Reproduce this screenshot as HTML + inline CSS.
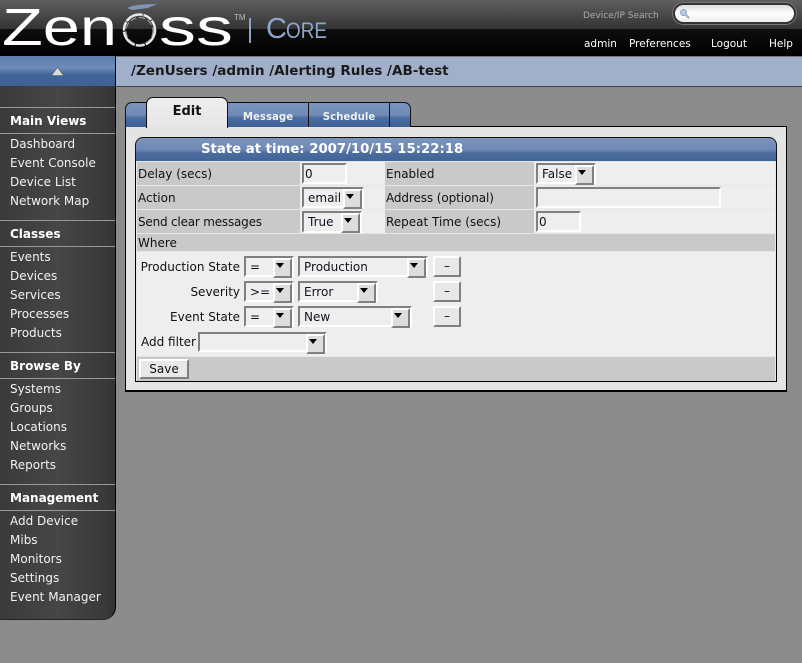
<!DOCTYPE html>
<html><head><meta charset="utf-8">
<style>
html,body{margin:0;padding:0;width:802px;height:663px;overflow:hidden;background:#8c8c8c;font-family:"DejaVu Sans",Verdana,sans-serif;font-size:12px;color:#111}
div,span{position:absolute;box-sizing:border-box;white-space:nowrap}
#hd1{left:0;top:0;width:802px;height:29px;background:linear-gradient(#5f5f5f,#333)}
#hd2{left:0;top:29px;width:802px;height:27px;background:linear-gradient(#0e0e0e,#000)}
.top{color:#fff;font-size:10.5px;top:38px;line-height:13px}
#side{left:0;top:86px;width:116px;height:534px;background:linear-gradient(90deg,#3a3a3a,#464646 50%,#3a3a3a 90%,#333);border-right:1px solid #000;border-bottom:1px solid #222;border-bottom-right-radius:13px}
#up{left:0;top:56px;width:116px;height:30px;background:linear-gradient(#5c7dab 0,#6f8cb6 40%,#41659a 62%,#3f6295);border-right:1px solid #000}
#bc{left:116px;top:56px;width:686px;height:31px;background:#a0b0ca;border-bottom:1px solid #444;border-top:1px solid #777;font-weight:bold;font-size:13.55px;color:#1a1a1a;padding-left:15px;line-height:29px}
.sh{left:0;width:115px;height:27px;border-top:1px solid #999;border-bottom:1px solid #999;color:#fff;font-weight:bold;font-size:12px;line-height:26px;padding-left:10px}
.si{left:10px;color:#f2f2f2;font-size:12px;line-height:15px}
.tab{top:102px;height:25px;background:linear-gradient(#7a95bd 0,#6f8bb6 50%,#4a6c9e 62%,#3f6295);border-top:1px solid #111;border-right:1px solid #111;color:#f2f2f2;font-weight:bold;font-size:10.2px;text-align:center;line-height:29px}
#box{left:125px;top:126px;width:662px;height:266px;background:#e4e4e4;border:1px solid #000;border-bottom-width:2px}
#sh{left:135px;top:137px;width:642px;height:25px;background:linear-gradient(#7a95bd 0,#7089b5 50%,#4a6c9e 65%,#416496);border:1px solid #111;border-bottom-color:#000;border-radius:8px 8px 0 0;color:#fff;font-weight:bold;font-size:13.25px;line-height:23px;padding-left:65px}
.c{background:#c9c9c9}.v{background:#eee}
.l{font-size:12px;line-height:15px;color:#111}
.in{background:#eee;border:2px solid;border-color:#808080 #fff #fff #808080;font-size:12px;line-height:18px;padding-left:1px}
.sel{background:#eee;border:2px solid;border-color:#808080 #fff #fff #808080;font-size:12px;line-height:19px;padding-left:4px;color:#112}
.sel i{position:absolute;right:0;top:0;width:15px;height:16px;background:#ddd;border:2px solid;border-color:#fff #808080 #808080 #fff}
.sel i:after{content:"";position:absolute;left:1px;top:3px;border-left:4px solid transparent;border-right:4px solid transparent;border-top:5px solid #000}
.btn{background:#e8e8e8;border:2px solid;border-color:#fff #808080 #808080 #fff;text-align:center;font-size:12px;line-height:17px}
</style></head><body>
<div id="hd1"></div><div id="hd2"></div>
<svg style="position:absolute;left:0;top:0" width="340" height="56">
<text x="2" y="45" font-family="Liberation Sans" font-size="52" fill="#fff" textLength="115" lengthAdjust="spacingAndGlyphs">Zen</text>
<text x="159" y="45" font-family="Liberation Sans" font-size="52" fill="#fff" textLength="74" lengthAdjust="spacingAndGlyphs">ss</text>
<circle cx="139.500" cy="30" r="15.500" fill="none" stroke="#e8e8e8" stroke-width="2.500" stroke-dasharray="18 1 9 1"/>
<circle cx="139.500" cy="31" r="13.500" fill="none" stroke="#aaa" stroke-width="1" stroke-dasharray="6 3"/>
<path d="M127 8 Q134 4 157 4 L148 8 L132 10Z" fill="#7f95b8"/>
<text x="234" y="20" font-family="Liberation Sans" font-size="8" fill="#bbb">TM</text>
<rect x="249" y="18" width="2" height="25" fill="#8da4c6"/>
<text x="266" y="38" font-family="Liberation Sans" font-size="29" fill="#8fa6c8">C</text>
<text x="286" y="38" font-family="Liberation Sans" font-size="22.500" fill="#8fa6c8" textLength="41" lengthAdjust="spacingAndGlyphs">ORE</text>
</svg>
<div style="left:583px;top:10px;color:#a8a8a8;font-size:9px;line-height:13px;width:77px">Device/IP Search</div>
<div style="left:673px;top:3px;width:123px;height:21px;border-radius:11px;border:2px solid #333;box-shadow:0 0 0 1px #777;background:linear-gradient(#ddd,#fff 50%,#eee)"></div>
<svg style="position:absolute;left:679px;top:8px" width="12" height="11"><circle cx="4.500" cy="4.500" r="3" fill="#b7cbe6" stroke="#8ea3c2"/><path d="M7 7L10 10" stroke="#aaa" stroke-width="2"/></svg>
<div class="top" style="left:584px">admin</div>
<div class="top" style="left:629px">Preferences</div>
<div class="top" style="left:711px">Logout</div>
<div class="top" style="left:769px">Help</div>

<div id="up"><svg style="position:absolute;left:51px;top:11px" width="13" height="9"><path d="M6.500 0.500L12.500 8.500H0.500Z" fill="#ddd" stroke="#555" stroke-width=".6"/></svg></div>
<div id="bc">/ZenUsers /admin /Alerting Rules /AB-test</div>
<div id="side"></div>

<div class="sh" style="top:107px">Main Views</div>
<div class="si" style="top:137px">Dashboard</div>
<div class="si" style="top:156px">Event Console</div>
<div class="si" style="top:175px">Device List</div>
<div class="si" style="top:194px">Network Map</div>
<div class="sh" style="top:220px">Classes</div>
<div class="si" style="top:250px">Events</div>
<div class="si" style="top:269px">Devices</div>
<div class="si" style="top:288px">Services</div>
<div class="si" style="top:307px">Processes</div>
<div class="si" style="top:326px">Products</div>
<div class="sh" style="top:352px">Browse By</div>
<div class="si" style="top:382px">Systems</div>
<div class="si" style="top:401px">Groups</div>
<div class="si" style="top:420px">Locations</div>
<div class="si" style="top:439px">Networks</div>
<div class="si" style="top:458px">Reports</div>
<div class="sh" style="top:484px">Management</div>
<div class="si" style="top:514px">Add Device</div>
<div class="si" style="top:533px">Mibs</div>
<div class="si" style="top:552px">Monitors</div>
<div class="si" style="top:571px">Settings</div>
<div class="si" style="top:590px">Event Manager</div>

<div id="box"></div>
<div class="tab" style="left:125px;width:22px;border-left:1px solid #111;border-top-left-radius:7px"></div>
<div class="tab" style="left:228px;width:81px">Message</div>
<div class="tab" style="left:309px;width:81px">Schedule</div>
<div class="tab" style="left:390px;width:21px;border-top-right-radius:7px"></div>
<div style="left:146px;top:97px;width:82px;height:31px;background:linear-gradient(#eee,#e6e6e6);border:1px solid #111;border-bottom:0;border-radius:7px 7px 0 0;font-weight:bold;font-size:13px;text-align:center;line-height:28px">Edit</div>

<div id="sh">State at time: 2007/10/15 15:22:18</div>
<div style="left:135px;top:161px;width:642px;height:221px;background:#e6e6e6;border:1px solid #000;border-top:0"></div>

<div class="c" style="left:137px;top:162px;width:163px;height:23px"></div>
<div class="v" style="left:300px;top:162px;width:85px;height:23px"></div>
<div class="c" style="left:385px;top:162px;width:149px;height:23px"></div>
<div class="v" style="left:534px;top:162px;width:241px;height:23px"></div>
<div class="c" style="left:137px;top:186px;width:163px;height:23px"></div>
<div class="v" style="left:300px;top:186px;width:85px;height:23px"></div>
<div class="c" style="left:385px;top:186px;width:149px;height:23px"></div>
<div class="v" style="left:534px;top:186px;width:241px;height:23px"></div>
<div class="c" style="left:137px;top:210px;width:163px;height:23px"></div>
<div class="v" style="left:300px;top:210px;width:85px;height:23px"></div>
<div class="c" style="left:385px;top:210px;width:149px;height:23px"></div>
<div class="v" style="left:534px;top:210px;width:241px;height:23px"></div>
<div class="c" style="left:137px;top:234px;width:638px;height:17px"></div>
<div class="v" style="left:137px;top:252px;width:638px;height:104px"></div>
<div class="c" style="left:137px;top:357px;width:638px;height:24px"></div>

<div class="l" style="left:138px;top:167px">Delay (secs)</div>
<div class="l" style="left:138px;top:191px">Action</div>
<div class="l" style="left:138px;top:215px;letter-spacing:-.2px">Send clear messages</div>
<div class="l" style="left:138px;top:236px">Where</div>
<div class="l" style="left:386px;top:167px">Enabled</div>
<div class="l" style="left:386px;top:191px;letter-spacing:-.1px">Address (optional)</div>
<div class="l" style="left:386px;top:215px">Repeat Time (secs)</div>

<div class="in" style="left:302px;top:163px;width:45px;height:21px">0</div>
<div class="sel" style="left:302px;top:187px;width:62px;height:21px">email<i></i></div>
<div class="sel" style="left:302px;top:211px;width:60px;height:22px">True<i></i></div>
<div class="sel" style="left:536px;top:163px;width:60px;height:21px">False<i></i></div>
<div class="in" style="left:536px;top:187px;width:185px;height:21px"></div>
<div class="in" style="left:536px;top:211px;width:45px;height:21px">0</div>

<div class="l" style="right:562px;top:260px">Production State</div>
<div class="l" style="right:562px;top:285px">Severity</div>
<div class="l" style="right:562px;top:310px">Event State</div>
<div class="l" style="left:141px;top:335px">Add filter</div>

<div class="sel" style="left:244px;top:256px;width:50px;height:21px">=<i></i></div>
<div class="sel" style="left:298px;top:256px;width:130px;height:21px">Production<i></i></div>
<div class="btn" style="left:433px;top:256px;width:28px;height:21px">–</div>
<div class="sel" style="left:244px;top:281px;width:50px;height:21px">&gt;=<i></i></div>
<div class="sel" style="left:298px;top:281px;width:80px;height:21px">Error<i></i></div>
<div class="btn" style="left:433px;top:281px;width:28px;height:21px">–</div>
<div class="sel" style="left:244px;top:306px;width:50px;height:21px">=<i></i></div>
<div class="sel" style="left:298px;top:306px;width:114px;height:21px">New<i></i></div>
<div class="btn" style="left:433px;top:306px;width:28px;height:21px">–</div>
<div class="sel" style="left:198px;top:332px;width:129px;height:20px"><i></i></div>
<div class="btn" style="left:139px;top:359px;width:50px;height:20px">Save</div>
</body></html>
